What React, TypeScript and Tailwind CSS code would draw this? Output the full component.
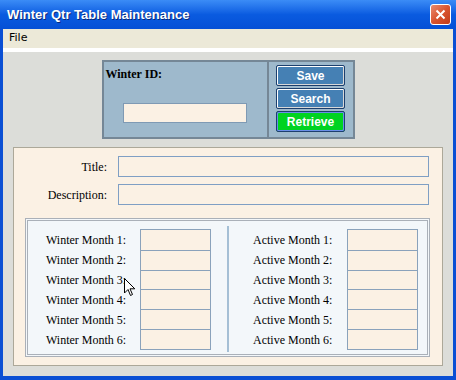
import React from "react";

const serif = { fontFamily: '"Liberation Serif", "Times New Roman", serif' };

function MonthColumn({ prefix }: { prefix: string }) {
  const rows = [1, 2, 3, 4, 5, 6];
  return (
    <div className="flex">
      <div className="flex flex-col w-[94px] pt-[1px]" style={serif}>
        {rows.map((n) => (
          <div key={n} className="h-[20px] flex items-center text-[12px] text-black leading-none">
            {prefix} Month {n}:
          </div>
        ))}
      </div>
      <div className="flex flex-col w-[71px] h-[121px] border border-[#8aa2bb] bg-[#fbf1e4]">
        {rows.map((n) => (
          <div key={n} className={"h-[20px] border-[#8aa2bb] " + (n === 1 ? "h-[19px]" : "border-t")} />
        ))}
      </div>
    </div>
  );
}

function XpButton({ label, green }: { label: string; green?: boolean }) {
  return (
    <button
      className={
        "w-[69px] h-[21px] rounded-[2px] border border-[#1c3f6e] text-white font-bold text-[12px] leading-none flex items-center justify-center " +
        (green
          ? "bg-[#00d321] shadow-[inset_1px_1px_0_#6a8ee8,inset_-1px_-1px_0_#6a8ee8]"
          : "bg-[#4580b4] shadow-[inset_1px_1px_0_#ffffff,inset_-1px_-1px_0_#d8d8d8]")
      }
      style={{ fontFamily: '"Liberation Sans", Arial, sans-serif' }}
    >
      {label}
    </button>
  );
}

export default function App() {
  return (
    <div className="w-[456px] h-[380px] flex flex-col bg-[#0a4fd4] relative overflow-hidden">
      {/* title bar */}
      <div className="h-[29px] flex items-center justify-between pl-[7px] pr-[5px] bg-gradient-to-b from-[#3b8cf6] via-[#0a5be0] to-[#0550d6] shrink-0">
        <span
          className="text-white font-bold text-[13px] [text-shadow:1px_1px_0_#0a2a78]"
          style={{ fontFamily: '"Liberation Sans", Arial, sans-serif' }}
        >
          Winter Qtr Table Maintenance
        </span>
        <div className="w-[21px] h-[21px] rounded-[3px] border border-white bg-gradient-to-br from-[#e98a6e] via-[#d9542f] to-[#c23a17] flex items-center justify-center">
          <svg width="11" height="11" viewBox="0 0 11 11">
            <path d="M1.5 1.5 L9.5 9.5 M9.5 1.5 L1.5 9.5" stroke="white" strokeWidth="2" />
          </svg>
        </div>
      </div>
      <div className="flex-1 flex flex-col px-[3px] pb-[4px]">
        {/* menu */}
        <div
          className="h-[19px] bg-[#ece9d8] flex items-center pl-[6px] text-[11px] text-black shrink-0"
          style={{ fontFamily: '"DejaVu Sans", Tahoma, sans-serif' }}
        >
          File
        </div>
        <div className="h-[4px] bg-white shrink-0" />
        {/* body */}
        <div className="flex-1 bg-[#dcddd9] flex flex-col items-center pt-[8px]">
          {/* top panel */}
          <div className="w-[253px] h-[79px] border-2 border-[#758796] bg-[#9eb9cc] flex">
            <div className="w-[163px] flex flex-col pl-[2px] pt-[3px]" style={serif}>
              <span className="font-bold text-[12px] text-black">Winter ID:</span>
              <input className="mt-[20px] ml-[17px] w-[124px] h-[20px] bg-[#fbf1e4] border border-[#7f9ab4] outline-none" />
            </div>
            <div className="w-[2px] bg-[#758796]" />
            <div className="flex-1 flex flex-col items-center pt-[3px] gap-[2px]">
              <XpButton label="Save" />
              <XpButton label="Search" />
              <XpButton label="Retrieve" green />
            </div>
          </div>
          {/* main panel */}
          <div className="mt-[8px] w-[430px] h-[219px] border border-[#aca899] bg-[#fbf1e4] px-[11px] pt-[8px]">
            <div className="flex items-center h-[21px]" style={serif}>
              <span className="w-[82px] text-right text-[12px] text-black">Title:</span>
              <input className="ml-[11px] w-[311px] h-[21px] border border-[#7f9fc4] bg-[#fbf1e4] outline-none" />
            </div>
            <div className="flex items-center h-[21px] mt-[7px]" style={serif}>
              <span className="w-[82px] text-right text-[12px] text-black">Description:</span>
              <input className="ml-[11px] w-[311px] h-[21px] border border-[#7f9fc4] bg-[#fbf1e4] outline-none" />
            </div>
            <div className="mt-[13px] w-[405px] h-[139px] border-[3px] border-double border-[#aab0b8] bg-[#f3f7fa] flex pt-[8px] pl-[18px]">
              <MonthColumn prefix="Winter" />
              <div className="ml-[16px] mr-[24px] -mt-[3px] w-[2px] h-[126px] bg-[#a5bfd5]" />
              <MonthColumn prefix="Active" />
            </div>
          </div>
        </div>
      </div>
      {/* mouse cursor */}
      <svg className="absolute left-[124px] top-[278px]" width="12" height="19" viewBox="0 0 12 19">
        <path d="M0.5 0.5 L0.5 15 L4 11.5 L6.5 17.5 L8.5 16.5 L6 10.8 L10.8 10.8 Z" fill="white" stroke="black" strokeWidth="1" />
      </svg>
    </div>
  );
}
